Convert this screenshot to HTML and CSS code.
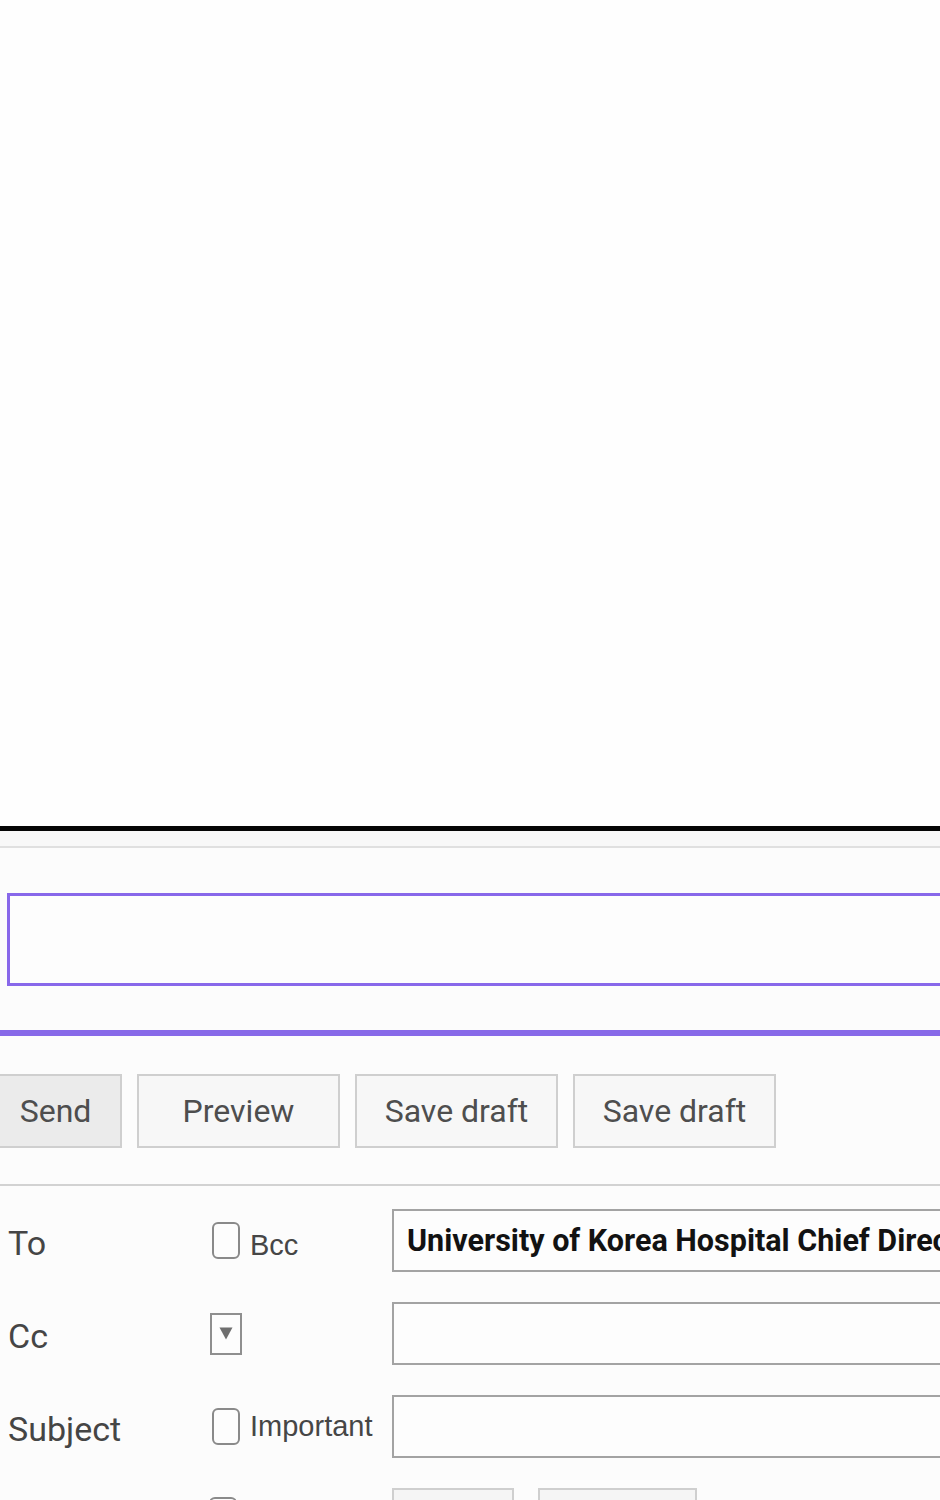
FILE: index.html
```html
<!DOCTYPE html>
<html>
<head>
<meta charset="utf-8">
<link rel="stylesheet" href="styles.css">
</head>
<body>
<div class="page">
  <div class="blank"></div>
  <div class="topbar"></div>
  <div class="compose">
    <div class="editor-box"></div>
    <div class="accent-bar"></div>
    <div class="actions">
      <button class="btn btn-send">Send</button>
      <button class="btn">Preview</button>
      <button class="btn">Save draft</button>
      <button class="btn">Save draft</button>
    </div>
    <div class="divider"></div>
    <div class="fields">
      <div class="label">To</div>
      <div class="ctrl"><span class="check"></span><span class="ctrl-text ctrl-text-low">Bcc</span></div>
      <div class="input input-filled">University of Korea Hospital Chief Director</div>

      <div class="label">Cc</div>
      <div class="ctrl"><span class="drop"><svg width="14" height="13" viewBox="0 0 14 13"><path d="M0.5 0.5 H13.5 L7 12.5 Z" fill="#6f6f6f"/></svg></span></div>
      <div class="input"></div>

      <div class="label">Subject</div>
      <div class="ctrl"><span class="check"></span><span class="ctrl-text">Important</span></div>
      <div class="input"></div>

      <div class="label"></div>
      <div class="ctrl ctrl-top"><span class="check check-low"></span></div>
      <div class="mini-row">
        <span class="mini-btn mini-a"></span>
        <span class="mini-btn mini-b"></span>
      </div>
    </div>
  </div>
</div>
</body>
</html>
```
FILE: styles.css
```css
html, body {
  margin: 0;
  padding: 0;
  background: #fefefe;
  overflow: hidden;
}
.page {
  width: 940px;
  height: 1500px;
  overflow: hidden;
  font-family: Roboto, "Liberation Sans", sans-serif;
}
.blank {
  height: 826px;
  background: #fefefe;
}
.topbar {
  height: 15px;
  border-top: 5px solid #050505;
  border-bottom: 2px solid #e0e0e0;
  background: #f8f8f8;
}
.compose {
  background: #fcfcfc;
  padding-top: 45px;
  height: 700px;
}
.editor-box {
  margin-left: 7px;
  width: 1000px;
  height: 87px;
  border: 3px solid #8868ea;
  background: #fdfdfd;
}
.accent-bar {
  margin-top: 44px;
  height: 6px;
  background: #8769e8;
}
.actions {
  display: flex;
  gap: 15px;
  margin-top: 38px;
  margin-left: -11px;
}
.btn {
  box-sizing: border-box;
  width: 203px;
  height: 74px;
  border: 2px solid #cfcfcf;
  background: #f7f7f7;
  color: #4e4e4e;
  font-family: Roboto, sans-serif;
  font-size: 32px;
  padding: 0;
  margin: 0;
}
.btn-send {
  width: 133px;
  background: #ebebeb;
}
.divider {
  margin-top: 36px;
  height: 2px;
  background: #d2d2d2;
}
.fields {
  display: grid;
  grid-template-columns: 202px 182px 700px;
  grid-auto-rows: 63px;
  row-gap: 30px;
  padding-left: 8px;
  margin-top: 23px;
}
.label {
  display: flex;
  align-items: center;
  font-size: 34px;
  color: #454545;
  padding-top: 5px;
}
.ctrl {
  display: flex;
  align-items: center;
  gap: 10px;
}
.ctrl-top {
  align-items: flex-start;
  padding-top: 9px;
}
.check {
  box-sizing: border-box;
  width: 28px;
  height: 37px;
  border: 2px solid #8a8a8a;
  border-radius: 6px;
  background: #fdfdfd;
  margin-left: 2px;
}
.check-low {
  margin-left: -1px;
}
.ctrl-text {
  font-family: "Liberation Sans", Arial, sans-serif;
  font-size: 29px;
  color: #464646;
}
.ctrl-text-low {
  padding-top: 10px;
}
.drop {
  box-sizing: border-box;
  width: 32px;
  height: 42px;
  border: 2px solid #8f8f8f;
  display: flex;
  align-items: center;
  justify-content: center;
  background: #fdfdfd;
}
.input {
  box-sizing: border-box;
  border: 2px solid #a3a3a3;
  background: #fdfdfd;
  height: 63px;
}
.input-filled {
  display: flex;
  align-items: center;
  padding-left: 13px;
  font-weight: 700;
  font-size: 30.5px;
  color: #121212;
  white-space: nowrap;
  overflow: hidden;
}
.mini-row {
  display: flex;
  gap: 24px;
}
.mini-btn {
  box-sizing: border-box;
  height: 40px;
  border: 2px solid #cfcfcf;
  background: #f5f5f5;
}
.mini-a { width: 122px; }
.mini-b { width: 159px; }
```
